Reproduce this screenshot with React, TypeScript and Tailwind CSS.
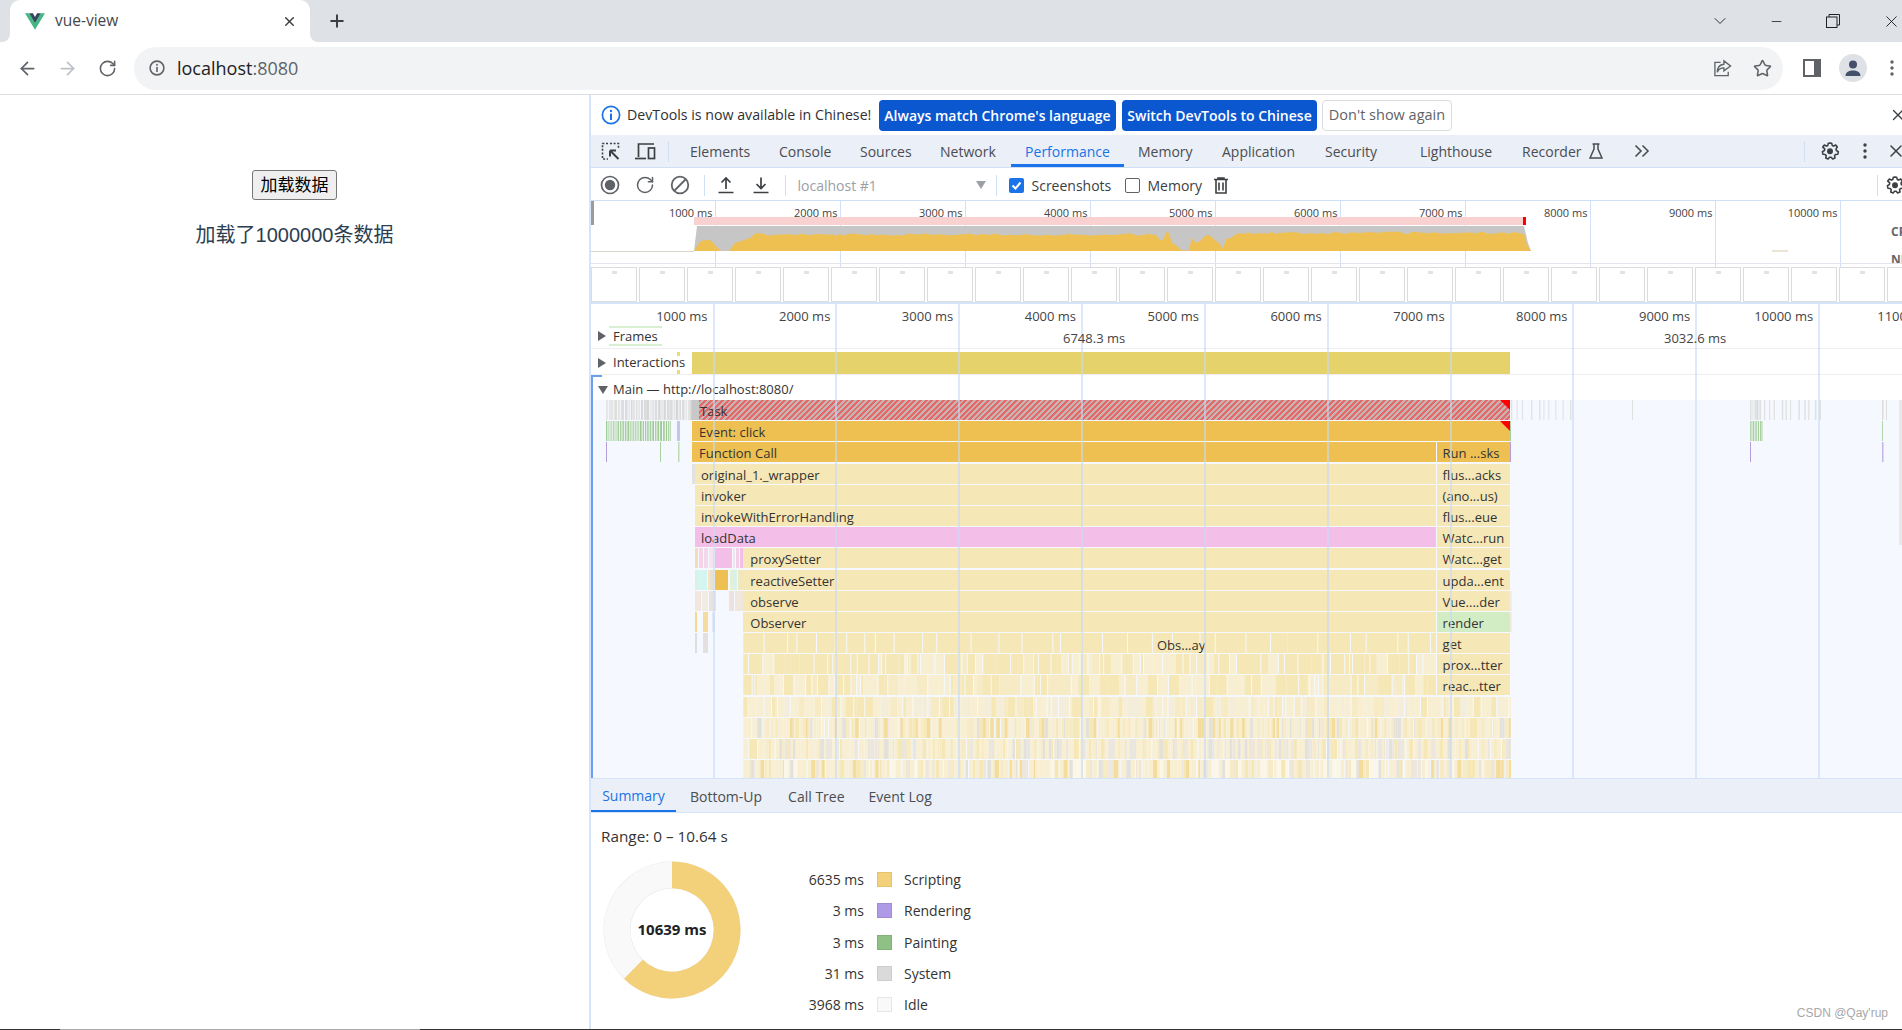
import { ArrowLeft, ArrowRight, ChevronDown, Minus, Plus, RotateCw, Star, X } from "lucide-react";

// all x values below are page pixels; the flame chart starts at x = 591
const ORIGIN = 591;
const OVERVIEW_TICKS = Array.from({ length: 10 }, (_, i) => ({ label: `${(i + 1) * 1000} ms`, x: 715.4 + i * 125 }));
const FLAME_TICKS = Array.from({ length: 11 }, (_, i) => ({ label: `${(i + 1) * 1000} ms`, x: 712.5 + i * 122.85 }));

const tabs = [
  { name: "Elements", width: "w-[89px]" },
  { name: "Console", width: "w-[81px]" },
  { name: "Sources", width: "w-[80px]" },
  { name: "Network", width: "w-[85px]" },
  { name: "Performance", width: "w-[113px]", active: true },
  { name: "Memory", width: "w-[84px]" },
  { name: "Application", width: "w-[103px]" },
  { name: "Security", width: "w-[95px]" },
  { name: "Lighthouse", width: "w-[102px]" },
];

const legend = [
  { value: "6635 ms", label: "Scripting", color: "bg-[#f3d07a] border-[#e5c36f]" },
  { value: "3 ms", label: "Rendering", color: "bg-[#af9ae8] border-[#a08dd6]" },
  { value: "3 ms", label: "Painting", color: "bg-[#8fc084] border-[#83b279]" },
  { value: "31 ms", label: "System", color: "bg-[#dadada] border-[#cdcdcd]" },
  { value: "3968 ms", label: "Idle", color: "bg-[#f9f9f9] border-[#e6e6e6]" },
  { value: "", label: "", color: "bg-[#f9f9f9] border-[#e6e6e6]" },
];

type Segment = { from: number; to: number; color: string; text?: string; pad?: number };

const YELLOW = "bg-[#eec051]";
const CREAM = "bg-[#f6e7b6]";
const PINK = "bg-[#f3bee8]";

const rows: Segment[][] = [
  [],
  [{ from: 692, to: 1510, color: YELLOW, text: "Event: click", pad: 7 }],
  [
    { from: 692, to: 1436, color: YELLOW, text: "Function Call", pad: 7 },
    { from: 1436.6, to: 1510, color: YELLOW, text: "Run ...sks", pad: 6 },
  ],
  [
    { from: 692, to: 695, color: "bg-[#e2e2e2]" },
    { from: 695, to: 1436, color: CREAM, text: "original_1._wrapper", pad: 6 },
    { from: 1436.6, to: 1510, color: CREAM, text: "flus...acks", pad: 6 },
  ],
  [
    { from: 695, to: 1436, color: CREAM, text: "invoker", pad: 6 },
    { from: 1436.6, to: 1510, color: CREAM, text: "(ano...us)", pad: 6 },
  ],
  [
    { from: 695, to: 1436, color: CREAM, text: "invokeWithErrorHandling", pad: 6 },
    { from: 1436.6, to: 1510, color: CREAM, text: "flus...eue", pad: 6 },
  ],
  [
    { from: 695, to: 1436, color: PINK, text: "loadData", pad: 6 },
    { from: 1436.6, to: 1510, color: CREAM, text: "Watc...run", pad: 6 },
  ],
  [
    { from: 695, to: 698, color: "bg-[#f5dcb8]" },
    { from: 699, to: 703, color: "bg-[#f3d5e6]" },
    { from: 704, to: 708, color: "bg-[#f3d8ec]" },
    { from: 709, to: 714, color: "bg-[#f5e3ee]" },
    { from: 715, to: 732, color: PINK },
    { from: 733, to: 734.5, color: "bg-[#ece6f0]" },
    { from: 735.5, to: 739, color: "bg-[#f3cfe8]" },
    { from: 740, to: 743, color: PINK },
    { from: 743.3, to: 1436, color: CREAM, text: "proxySetter", pad: 7 },
    { from: 1436.6, to: 1510, color: CREAM, text: "Watc...get", pad: 6 },
  ],
  [
    { from: 695, to: 698, color: "bg-[#d9f2e4]" },
    { from: 698, to: 707, color: "bg-[#d5f5f0]" },
    { from: 708, to: 710, color: "bg-[#f3e6c8]" },
    { from: 710, to: 714, color: "bg-[#e9e2d2]" },
    { from: 715, to: 728, color: YELLOW },
    { from: 730, to: 733, color: "bg-[#e3f0d8]" },
    { from: 733, to: 737, color: "bg-[#d6f2ea]" },
    { from: 738, to: 743, color: "bg-[#f2e6bc]" },
    { from: 743.3, to: 1436, color: CREAM, text: "reactiveSetter", pad: 7 },
    { from: 1436.6, to: 1510, color: CREAM, text: "upda...ent", pad: 6 },
  ],
  [
    { from: 695, to: 701, color: "bg-[#efe7e0]" },
    { from: 702, to: 708, color: "bg-[#f3ece2]" },
    { from: 709, to: 716, color: "bg-[#e8e3df]" },
    { from: 729, to: 734, color: "bg-[#ebe3dc]" },
    { from: 735, to: 743, color: "bg-[#efe6dd]" },
    { from: 743.3, to: 1436, color: CREAM, text: "observe", pad: 7 },
    { from: 1436.6, to: 1510, color: CREAM, text: "Vue....der", pad: 6 },
    { from: 1510, to: 1511.5, color: "bg-[#f3ece0]" },
  ],
  [
    { from: 695, to: 697, color: "bg-[#f3d98f]" },
    { from: 703, to: 708, color: "bg-[#f3dc9c]" },
    { from: 712, to: 715, color: "bg-[#e3e9f2]" },
    { from: 743.3, to: 1436, color: CREAM, text: "Observer", pad: 7 },
    { from: 1436.6, to: 1510, color: "bg-[#d2edc4]", text: "render", pad: 6 },
    { from: 1510, to: 1511.5, color: "bg-[#f3ece0]" },
  ],
  [
    { from: 695, to: 697, color: "bg-[#dedede]" },
    { from: 703, to: 708, color: "bg-[#e3e1df]" },
    { from: 1436.6, to: 1510, color: CREAM, text: "get", pad: 6 },
  ],
  [{ from: 1436.6, to: 1510, color: CREAM, text: "prox...tter", pad: 6 }],
  [{ from: 1436.6, to: 1510, color: CREAM, text: "reac...tter", pad: 6 }],
  [],
  [],
  [],
  [],
];

function makeRandom(seed: number) {
  let s = seed;
  return () => {
    s = (s + 0x6d2b79f5) | 0;
    let t = Math.imul(s ^ (s >>> 15), 1 | s);
    t = (t + Math.imul(t ^ (t >>> 7), 61 | t)) ^ t;
    return ((t ^ (t >>> 14)) >>> 0) / 4294967296;
  };
}

type Stripe = { x: number; w: number; fill: string };

function makeStripes(seed: number, from: number, to: number, min: number, max: number, gap: number, fills: string[]) {
  const rand = makeRandom(seed);
  const out: Stripe[] = [];
  let x = from;
  while (x < to) {
    const w = Math.min(min + rand() * (max - min), to - x);
    out.push({ x, w, fill: fills[Math.floor(rand() * fills.length)] });
    x += w + (rand() < gap ? 1 : 0);
  }
  return out;
}

// thin marks with even-ish spacing, for the idle tasks either side of the long one
function makeTicks(seed: number, from: number, to: number, step: number, fill: string) {
  const rand = makeRandom(seed);
  const out: Stripe[] = [];
  for (let x = from; x < to; x += step * (0.6 + rand() * 0.8)) out.push({ x, w: 1 + rand() * 0.6, fill });
  return out;
}

const c = "#f6e7b6";
const p = "#f8efd3";
const k = "#f7ebc6";
const o = "#f3dc9c";
const g = "#e4e1da";
const b = "#efe6da";

const stripeRows: Record<number, Stripe[]> = {
  11: makeStripes(11, 743.3, 1436, 6, 34, 0.85, [c, c, c, c]),
  12: makeStripes(12, 743.3, 1436, 1, 14, 0.6, [c, c, c, p, k]),
  13: makeStripes(13, 743.3, 1436, 1, 14, 0.55, [c, c, p, p, k]),
  14: makeStripes(14, 743.3, 1511, 1, 8, 0.3, [p, p, c, k, "#f4edd9"]),
  15: makeStripes(15, 743.3, 1511, 1, 4, 0.1, [p, p, p, p, c, k, k, g, o]),
  16: makeStripes(16, 743.3, 1511, 1, 4, 0.1, [p, p, p, p, c, k, g, b, "#e9e6e0"]),
  17: makeStripes(17, 743.3, 1511, 1, 5, 0.2, [p, p, p, p, c, k, o, g, b, "#fbf6e6"]),
};

const taskMinis = makeStripes(21, 606, 692, 1, 3, 0.8, ["#dcdcdc", "#e4e4e4", "#d6d6d6"]).concat(
  makeTicks(22, 1511, 1575, 7, "#e2e2e2"),
  [{ x: 1632, w: 1, fill: "#e0e0e0" }, { x: 1882, w: 1.5, fill: "#dcdcdc" }, { x: 1886, w: 1, fill: "#dcdcdc" }],
  makeStripes(26, 1750, 1760, 1, 2, 0.6, ["#d8d8d8", "#e0e0e0"]),
  makeTicks(23, 1760, 1823, 6, "#e0e0e0"),
);

const eventMinis = makeStripes(24, 606, 671, 1, 2, 1, ["#a9d0a0", "#b4d7ac", "#9fca96"]).concat(
  [{ x: 677, w: 3, fill: "#c2c6ea" }, { x: 1510, w: 1, fill: "#a9d0a0" }, { x: 1882, w: 1, fill: "#b4d7ac" }],
  makeStripes(25, 1750, 1763, 1, 2, 1, ["#a9d0a0", "#b4d7ac"]),
  [{ x: 1761, w: 1, fill: "#f0d78c" }],
);

const callMinis: Stripe[] = [
  { x: 606, w: 1, fill: "#b39ddb" },
  { x: 660, w: 1, fill: "#a9d0a0" },
  { x: 678, w: 1.5, fill: "#bcdcb4" },
  { x: 1510, w: 1, fill: "#b39ddb" },
  { x: 1750, w: 1, fill: "#b39ddb" },
  { x: 1882, w: 1.5, fill: "#c5b5e6" },
];

const minis: Record<number, Stripe[]> = { 0: taskMinis, 1: eventMinis, 2: callMinis, ...stripeRows };

function yellowPoints() {
  const rand = makeRandom(7);
  const points: [number, number][] = [
    [694, 251], [700, 241.5], [705, 240], [711, 240.5], [716, 246], [721, 251], [729, 251], [735, 243], [744, 240], [750, 238], [756, 233],
  ];
  for (let x = 760; x < 1158; x += 4) points.push([x, 233.5 + rand() * 2.2]);
  points.push(
    [1160, 240], [1163, 240], [1166, 232], [1169, 233], [1172, 243], [1176, 245], [1181, 250], [1189, 250.5], [1191, 241], [1192, 238], [1196, 243], [1200, 241], [1205, 236], [1209, 235], [1215, 240], [1220, 244], [1223, 249], [1226, 239], [1231, 238], [1236, 234],
  );
  for (let x = 1240; x < 1520; x += 4) points.push([x, 231.5 + rand() * 2.6]);
  points.push([1524, 234], [1527, 245], [1531, 251]);
  return points.map(([x, y]) => `${x - ORIGIN},${y - 201}`).join(" ");
}

function VueLogo() {
  return (
    <svg width="20" height="17" viewBox="0 0 24 20">
      <path d="M0 0 L12 20 L24 0 H19 L12 12 L5 0 Z" fill="#42b883" />
      <path d="M5 0 L12 12 L19 0 H14.5 L12 4.5 L9.5 0 Z" fill="#35495e" />
    </svg>
  );
}

function InfoCircle({ size, color, stroke }: { size: number; color: string; stroke: number }) {
  return (
    <svg width={size} height={size} viewBox="0 0 20 20" fill="none">
      <circle cx="10" cy="10" r="8.6" stroke={color} strokeWidth={stroke} />
      <circle cx="10" cy="6" r="1.2" fill={color} />
      <rect x="9" y="8.6" width="2" height="6.4" fill={color} />
    </svg>
  );
}

function Gear({ size = 20 }: { size?: number }) {
  return (
    <svg width={size} height={size} viewBox="0 0 24 24" fill="none" stroke="#3c4043" strokeWidth="1.9" strokeLinejoin="round">
      <path d="M12 2.5l2 .1.7 2.7 1.7.8 2.5-1.2 1.9 2.4-1.6 2.2.4 1.9 2.4 1.4-.6 3-2.8.3-1.2 1.5.6 2.7-2.8 1.3-1.8-2.1h-1.9l-1.8 2.1-2.8-1.3.6-2.7-1.2-1.5-2.8-.3-.6-3 2.4-1.4.4-1.9L3.3 7.3l1.9-2.4 2.5 1.2 1.7-.8.6-2.7z" />
      <circle cx="12" cy="12.3" r="2.6" fill="#3c4043" />
    </svg>
  );
}

function Dots({ color = "#5f6368" }: { color?: string }) {
  return (
    <svg width="4" height="16" viewBox="0 0 4 16" fill={color}>
      <circle cx="2" cy="2" r="1.7" />
      <circle cx="2" cy="8" r="1.7" />
      <circle cx="2" cy="14" r="1.7" />
    </svg>
  );
}

function TabStrip() {
  return (
    <div className="flex h-[42px] shrink-0 items-center bg-[#dee1e6] pl-[10px]">
      <div className="relative flex h-[42px] w-[300px] items-center rounded-t-[10px] bg-white pl-[15px]">
        <div className="absolute bottom-0 left-[-10px] h-[10px] w-[10px] bg-white">
          <div className="h-full w-full rounded-br-[8px] bg-[#dee1e6]" />
        </div>
        <div className="absolute bottom-0 right-[-10px] h-[10px] w-[10px] bg-white">
          <div className="h-full w-full rounded-bl-[8px] bg-[#dee1e6]" />
        </div>
        <VueLogo />
        <span className="ml-[10px] text-[15.500px] text-[#45474a]">vue-view</span>
        <X className="ml-auto mr-[13px] text-[#3c4043]" size={15} strokeWidth={2.4} />
      </div>
      <Plus className="ml-[17px] text-[#3c4043]" size={20} strokeWidth={2.4} />
      <div className="ml-auto flex items-center">
        <ChevronDown className="text-[#222]" size={20} strokeWidth={1.1} />
        <Minus className="ml-[39px] text-[#111]" size={15} strokeWidth={1.2} />
        <svg className="ml-[42px]" width="14" height="14" viewBox="0 0 14 14" fill="none" stroke="#222" strokeWidth="1">
          <rect x="0.5" y="3" width="10.5" height="10.5" />
          <path d="M3 3V.5h10.5V11H11" />
        </svg>
        <X className="ml-[42px] mr-[1px] text-[#111]" size={19} strokeWidth={1.1} />
      </div>
    </div>
  );
}

function AddressBar() {
  return (
    <div className="flex h-[53px] shrink-0 items-center border-b border-[#dadce0] bg-white pl-[17px]">
      <ArrowLeft className="text-[#5f6368]" size={21} strokeWidth={2} />
      <ArrowRight className="ml-[19px] text-[#bdc1c6]" size={21} strokeWidth={2} />
      <RotateCw className="ml-[20px] text-[#5f6368]" size={19} strokeWidth={2} />
      <div className="ml-[17px] flex h-[43px] w-[1649px] items-center rounded-full bg-[#f1f3f4] pl-[15px] pr-[11px]">
        <InfoCircle size={16} color="#5f6368" stroke={2} />
        <span className="ml-[12px] text-[18px] text-[#202124]">
          localhost<span className="text-[#5f6368]">:8080</span>
        </span>
        <svg className="ml-auto" width="19" height="19" viewBox="0 0 20 20" fill="none" stroke="#5f6368" strokeWidth="1.4">
          <path d="M8 3.5H2v14h14v-4" />
          <path d="M11.5 2l7 5.3-7 5.2V9.3C8 9.3 5.8 10.5 4.5 14c0-5 2.7-8 7-8.5z" />
        </svg>
        <Star className="ml-[21px] text-[#5f6368]" size={19} strokeWidth={2} />
      </div>
      <div className="ml-[20px] flex h-[18px] w-[18px] items-center border-[2.5px] border-[#5f6368] border-r-[7px] bg-white" />
      <div className="ml-[18px] flex h-[28px] w-[28px] items-center justify-center rounded-full bg-[#dee1e6]">
        <svg width="18" height="18" viewBox="0 0 18 18" fill="#45506a">
          <circle cx="9" cy="5.5" r="4" />
          <path d="M1.5 17c0-4 3.6-5.6 7.5-5.6s7.5 1.6 7.5 5.6z" />
        </svg>
      </div>
      <div className="ml-[23px]">
        <Dots />
      </div>
    </div>
  );
}

function PageContent() {
  return (
    <div className="flex w-[589px] shrink-0 flex-col items-center bg-white pt-[75px] [font-family:'Liberation_Sans','Noto_Sans_CJK_SC',sans-serif]">
      <button className="flex h-[30px] w-[85px] items-center justify-center rounded-[3px] border border-[#767676] bg-[#efefef] pt-[1px] text-[17px] text-black">
        加载数据
      </button>
      <p className="mt-[23px] text-[20px] leading-[24px] text-[#2c3e50]">加载了1000000条数据</p>
    </div>
  );
}

function InfoBar() {
  return (
    <div className="flex h-[40px] shrink-0 items-center bg-white pl-[10px] text-[14px]">
      <InfoCircle size={20} color="#1a73e8" stroke={1.7} />
      <span className="ml-[6px] w-[245px] whitespace-nowrap text-[14.200px] text-[#303134]">DevTools is now available in Chinese!</span>
      <button className="ml-[7px] flex h-[31px] w-[237px] items-center justify-center rounded-[4px] bg-[#0b57d0] font-semibold text-white">
        Always match Chrome's language
      </button>
      <button className="ml-[6px] flex h-[31px] w-[195px] items-center justify-center rounded-[4px] bg-[#0b57d0] font-semibold text-white">
        Switch DevTools to Chinese
      </button>
      <button className="ml-[5px] flex h-[31px] w-[130px] items-center justify-center rounded-[4px] border border-[#dadce0] text-[14.500px] font-medium text-[#5f6368]">
        Don't show again
      </button>
      <X className="ml-auto mr-[-5px] text-[#3c4043]" size={18} strokeWidth={1.8} />
    </div>
  );
}

function TabBar() {
  return (
    <div className="flex h-[33px] shrink-0 items-center border-b border-[#cfdff5] bg-[#ebeff7] text-[14px] text-[#4a4d52]">
      <div className="ml-[2px] flex w-[35px] justify-center">
        <svg width="19" height="19" viewBox="0 0 19 19" fill="none" stroke="#3c4043" strokeWidth="1.6">
          <path d="M7 1.5H1.5V17H7" strokeDasharray="2 1.6" />
          <path d="M9 1.5h8.5V7" strokeDasharray="2 1.6" />
          <path d="M9 8.5h6M9 8.5v6M9 8.5l8.5 8.5" strokeWidth="2" />
        </svg>
      </div>
      <div className="flex w-[35px] justify-center">
        <svg width="21" height="19" viewBox="0 0 21 19" fill="none" stroke="#3c4043" strokeWidth="1.7">
          <path d="M3.5 15V2H19" />
          <path d="M0 16.5h11" />
          <rect x="13.5" y="6" width="6" height="10.5" />
        </svg>
      </div>
      <div className="ml-[5px] h-[21px] w-px bg-[#cfdff5]" />
      <div className="ml-[7px] flex h-full">
        {tabs.map((tab) => (
          <div
            key={tab.name}
            className={
              tab.active
                ? `${tab.width} flex items-center justify-center border-b-[3px] border-[#1a73e8] pt-[3px] text-[#1a73e8]`
                : `${tab.width} flex items-center pl-[14px]`
            }
          >
            {tab.name}
          </div>
        ))}
        <div className="flex w-[112px] items-center pl-[14px]">
          Recorder
          <svg className="ml-[7px]" width="14" height="16" viewBox="0 0 14 16" fill="none" stroke="#4a4d52" strokeWidth="1.5">
            <path d="M3.5 1h7M5 1v5L1 15h12L9 6V1" />
          </svg>
        </div>
      </div>
      <svg className="ml-[14px]" width="16" height="14" viewBox="0 0 16 14" fill="none" stroke="#4a4d52" strokeWidth="1.6">
        <path d="M1.5 1.5L7 7l-5.500 5.500M8.500 1.500L14 7l-5.500 5.500" />
      </svg>
      <div className="ml-auto h-[21px] w-px bg-[#cfdff5]" />
      <div className="ml-[15px]">
        <Gear />
      </div>
      <div className="ml-[23px]">
        <Dots color="#3c4043" />
      </div>
      <X className="ml-[19px] mr-[-4px] text-[#3c4043]" size={20} strokeWidth={1.8} />
    </div>
  );
}

function RecordBar() {
  return (
    <div className="flex h-[33px] shrink-0 items-center border-b border-[#cfdff5] bg-white pt-[2px] text-[14px] text-[#3c4043]">
      <div className="ml-[1.500px] flex w-[35px] justify-center">
        <svg width="20" height="20" viewBox="0 0 20 20" fill="none">
          <circle cx="10" cy="10" r="8.5" stroke="#5f6368" strokeWidth="1.7" />
          <circle cx="10" cy="10" r="5.2" fill="#5f6368" />
        </svg>
      </div>
      <div className="flex w-[35px] justify-center">
        <RotateCw className="text-[#5f6368]" size={20} strokeWidth={1.8} />
      </div>
      <div className="flex w-[35px] justify-center">
        <svg width="20" height="20" viewBox="0 0 20 20" fill="none" stroke="#5f6368" strokeWidth="1.8">
          <circle cx="10" cy="10" r="8.300" />
          <path d="M4.500 15.500L15.500 4.500" />
        </svg>
      </div>
      <div className="ml-[6px] h-[21px] w-px bg-[#cfdff5]" />
      <div className="ml-[4px] flex w-[35px] justify-center">
        <svg width="18" height="18" viewBox="0 0 18 18" fill="none" stroke="#3c4043" strokeWidth="1.700">
          <path d="M9 13V2M4.500 6.500L9 2l4.500 4.500M1.500 16.500h15" />
        </svg>
      </div>
      <div className="flex w-[35px] justify-center">
        <svg width="18" height="18" viewBox="0 0 18 18" fill="none" stroke="#3c4043" strokeWidth="1.700">
          <path d="M9 1.500V12.500M4.500 8L9 12.500 13.500 8M1.500 16.500h15" />
        </svg>
      </div>
      <div className="ml-[6px] h-[21px] w-px bg-[#cfdff5]" />
      <span className="ml-[12px] w-[178px] text-[#9aa0a6]">localhost #1</span>
      <div className="h-0 w-0 border-x-[5px] border-t-[8px] border-x-transparent border-t-[#9aa0a6]" />
      <div className="ml-[10px] h-[21px] w-px bg-[#cfdff5]" />
      <div className="ml-[12px] flex h-[15px] w-[15px] items-center justify-center rounded-[2px] bg-[#1a73e8]">
        <svg width="11" height="11" viewBox="0 0 11 11" fill="none" stroke="white" strokeWidth="2">
          <path d="M1.500 5.500l3 3 5-6" />
        </svg>
      </div>
      <span className="ml-[8px] w-[93px]">Screenshots</span>
      <div className="h-[15px] w-[15px] rounded-[2px] border border-[#5f6368] bg-white" />
      <span className="ml-[8px] w-[66px]">Memory</span>
      <svg width="14" height="17" viewBox="0 0 14 17" fill="none" stroke="#3c4043" strokeWidth="1.600">
        <path d="M0 2.500h14M4 2.500V1h6v1.500M2 2.500V16h10V2.500M5 5.500v8M9 5.500v8" />
      </svg>
      <div className="ml-auto h-[21px] w-px bg-[#cfdff5]" />
      <div className="ml-[7px] mr-[-3px]">
        <Gear />
      </div>
    </div>
  );
}

function Overview() {
  const yellow = yellowPoints();
  const left = 694 - ORIGIN;
  return (
    <div className="relative h-[103px] shrink-0 overflow-hidden border-b-2 border-[#d6e4f9] bg-white">
      {OVERVIEW_TICKS.map((tick) => (
        <div key={tick.x} className="absolute inset-y-0 w-px bg-[#d3e1f8]" style={{ left: tick.x - ORIGIN }} />
      ))}
      <div className="h-[24px] w-[3px] bg-[#9b9b9b]" />
      {OVERVIEW_TICKS.map((tick) => (
        <span
          key={tick.label}
          className="absolute top-[5px] w-[70px] text-right text-[11px] leading-[14px] text-[#444]"
          style={{ left: tick.x - ORIGIN - 73 }}
        >
          {tick.label}
        </span>
      ))}
      <div className="absolute left-[103px] top-[16px] h-[8px] w-[832px] bg-[#f9d1d1]">
        <div className="ml-auto h-full w-[3px] bg-[#ff0000]" />
      </div>
      <svg className="absolute left-0 top-0" width="1311" height="62">
        <rect x="0" y="50" width={left} height="1" fill="#dcd6d0" />
        <polygon points={`${left},50 ${left + 3},25 ${1524 - ORIGIN},25 ${1528 - ORIGIN},42 ${1531 - ORIGIN},50`} fill="#c6c6c6" />
        <polygon points={yellow} fill="#eec051" />
        <rect x={1772 - ORIGIN} y="49.500" width="16" height="1" fill="#dcc9a8" />
      </svg>
      <span className="absolute left-[1300px] top-[24px] text-[12px] font-bold leading-[14px] text-[#666]">CPU</span>
      <span className="absolute left-[1300px] top-[52px] text-[12px] font-bold leading-[14px] text-[#666]">NET</span>
      <div className="absolute left-0 top-[62px] h-px w-full bg-[#e2e6ec]" />
      <div className="absolute left-0 top-[66px] flex gap-[2px]">
        {Array.from({ length: 28 }, (_, i) => (
          <div key={i} className="flex h-[35px] w-[46px] shrink-0 justify-center border border-[#dcdcdc] bg-white pt-[3px]">
            <div className="h-[3px] w-[5px] bg-[#e2e2e2]" />
          </div>
        ))}
      </div>
    </div>
  );
}

function FlameRow({ index, segments }: { index: number; segments: Segment[] }) {
  const stripes = minis[index];
  return (
    <div className="relative h-[21.200px] shrink-0">
      {stripes && (
        <svg className="absolute left-0 top-0 h-[20px] w-full">
          {stripes.map((s, i) => (
            <rect key={i} x={s.x - ORIGIN} y="0" width={s.w} height="20" fill={s.fill} />
          ))}
        </svg>
      )}
      {segments.map((seg, i) => (
        <div
          key={i}
          className={`absolute inset-y-0 bottom-[1.200px] overflow-hidden whitespace-nowrap text-[13px] leading-[22px] text-[#333] ${seg.color}`}
          style={{ left: seg.from - ORIGIN, width: seg.to - seg.from, paddingLeft: seg.pad ?? 0 }}
        >
          {seg.text}
        </div>
      ))}
    </div>
  );
}

function FlameChart() {
  return (
    <div className="relative flex h-[474px] shrink-0 flex-col overflow-hidden bg-white">
      <div className="h-[22px] shrink-0" />
      <div className="flex h-[23px] shrink-0 items-center border-b border-[#eeeeee] pb-[3px] pl-[7px] text-[13px] text-[#333]">
        <div className="h-0 w-0 border-y-[5px] border-l-[8px] border-y-transparent border-l-[#5f6368]" />
        <span className="ml-[3px] border-y-2 border-[#d8f0d0] px-[4px] leading-[16px]">Frames</span>
      </div>
      <div className="relative flex h-[26px] shrink-0 items-center border-b border-[#eeeeee] pl-[7px] pt-[2px] text-[13px] text-[#333]">
        <div className="h-0 w-0 border-y-[5px] border-l-[8px] border-y-transparent border-l-[#5f6368]" />
        <span className="ml-[7px]">Interactions</span>
        <div className="absolute bottom-0 left-[101px] top-[3px] w-[818px] bg-[#e5d26a]" />
        <div className="absolute left-[86px] top-[3px] h-[22px] w-[3px] border-y-4 border-[#f0d878]" />
      </div>
      <div className="flex h-[25px] shrink-0 items-center pl-[7px] pt-[5px] text-[13px] text-[#333]">
        <div className="h-0 w-0 border-x-[5px] border-t-[8px] border-x-transparent border-t-[#5f6368]" />
        <span className="ml-[5px]">Main — http://localhost:8080/</span>
      </div>
      <div className="relative flex min-h-0 flex-1 flex-col bg-[#f5f9ff]">
        <div className="absolute left-[108px] right-[392px] top-0 h-[20px] bg-[repeating-linear-gradient(135deg,#e46a6a_0px,#e46a6a_2px,#c9b2b2_2px,#c9b2b2_4px)] text-[13px] leading-[22px] text-[#333]">
          <span className="pl-[1px]">Task</span>
        </div>
        <div className="absolute left-[99px] top-0 h-[20px] w-[9px] bg-[#c8c8c8]" />
        {rows.map((segments, i) => (
          <FlameRow key={i} index={i} segments={segments} />
        ))}
        <div className="absolute left-[909px] top-0 h-[10px] w-[10px] bg-[#ff0000] [clip-path:polygon(0_0,100%_0,100%_100%)]" />
        <div className="absolute left-[909px] top-[21px] h-[10px] w-[10px] bg-[#ff0000] [clip-path:polygon(0_0,100%_0,100%_100%)]" />
        <span className="absolute left-[566px] top-[233.500px] text-[13px] leading-[22px] text-[#333]">Obs...ay</span>
      </div>
      {FLAME_TICKS.map((tick) => (
        <div key={tick.x} className="absolute inset-y-0 w-[2px] bg-[#c6daf9]/60" style={{ left: tick.x - ORIGIN }} />
      ))}
      {FLAME_TICKS.map((tick) => (
        <span
          key={tick.label}
          className="absolute top-[3px] w-[70px] text-right text-[13px] leading-[18px] text-[#444]"
          style={{ left: tick.x - ORIGIN - 75 }}
        >
          {tick.label}
        </span>
      ))}
      <span className="absolute left-[472px] top-[25px] text-[13px] leading-[18px] text-[#444]">6748.3 ms</span>
      <span className="absolute left-[1073px] top-[25px] text-[13px] leading-[18px] text-[#444]">3032.6 ms</span>
      <div className="absolute bottom-0 left-0 top-[71px] w-[2px] bg-[#6e9fef]" />
      <div className="absolute left-0 top-[71px] h-[2px] w-[11px] bg-[#6e9fef]" />
      <div className="absolute right-0 top-[96px] h-[145px] w-[3px] bg-[#e8e8e8]" />
    </div>
  );
}

function BottomTabs() {
  return (
    <div className="flex h-[35px] shrink-0 items-stretch border-y border-[#d6e4f9] bg-[#ebeff7] text-[14px] text-[#4a4d52]">
      <div className="flex w-[85px] items-center justify-center border-b-[2px] border-[#1a73e8] pt-[1px] text-[#1a73e8]">Summary</div>
      <div className="ml-[14px] flex items-center pt-[2px]">Bottom-Up</div>
      <div className="ml-[26px] flex items-center pt-[2px]">Call Tree</div>
      <div className="ml-[24px] flex items-center pt-[2px]">Event Log</div>
    </div>
  );
}

function Donut() {
  const cx = 69;
  const cy = 69;
  const r = 55;
  const sweep = (224.5 * Math.PI) / 180;
  const ex = cx + r * Math.sin(sweep);
  const ey = cy - r * Math.cos(sweep);
  return (
    <div className="relative h-[138px] w-[138px] shrink-0">
      <svg width="138" height="138" viewBox="0 0 138 138" fill="none">
        <circle cx={cx} cy={cy} r="68.500" fill="#e8e8e8" />
        <circle cx={cx} cy={cy} r={r} stroke="#f9f9f9" strokeWidth="26" />
        <path d={`M${cx} ${cy - r} A${r} ${r} 0 1 1 ${ex} ${ey}`} stroke="#f3d07a" strokeWidth="27" />
        <circle cx={cx} cy={cy} r="41.500" fill="white" />
      </svg>
      <div className="absolute inset-0 flex items-center justify-center pb-[1px] text-[15px] font-bold text-[#222]">10639 ms</div>
    </div>
  );
}

function Summary() {
  return (
    <div className="relative min-h-0 flex-1 overflow-hidden bg-white pl-[10px] pt-[13px] text-[14px] text-[#333]">
      <div className="text-[15.300px] leading-[20px]">Range: 0 – 10.64 s</div>
      <div className="mt-[15px] flex">
        <div className="ml-[2px]">
          <Donut />
        </div>
        <div className="flex flex-col pt-[3px]">
          {legend.map((item, i) => (
            <div key={i} className="flex h-[31.300px] shrink-0 items-center">
              <span className="w-[123px] text-right">{item.value}</span>
              <div className={`ml-[13px] h-[15px] w-[15px] border ${item.color}`} />
              <span className="ml-[12px]">{item.label}</span>
            </div>
          ))}
        </div>
      </div>
    </div>
  );
}

export default function App() {
  return (
    <div className="relative flex h-[1030px] w-[1902px] flex-col overflow-hidden bg-white [font-family:'Open_Sans','Noto_Sans_CJK_SC',sans-serif]">
      <TabStrip />
      <AddressBar />
      <div className="flex min-h-0 flex-1">
        <PageContent />
        <div className="flex min-w-0 flex-1 flex-col overflow-hidden border-l-2 border-[#d6e4f9]">
          <InfoBar />
          <TabBar />
          <RecordBar />
          <Overview />
          <FlameChart />
          <BottomTabs />
          <Summary />
        </div>
      </div>
      <div className="flex h-px shrink-0 bg-[#333]">
        <div className="ml-[60px] w-[360px] bg-[#aaaaaa]" />
      </div>
      <span className="absolute bottom-[8px] right-[14px] text-[12px] text-[#a8a8a8] [font-family:'Liberation_Sans',sans-serif]">
        CSDN @Qay'rup
      </span>
    </div>
  );
}
